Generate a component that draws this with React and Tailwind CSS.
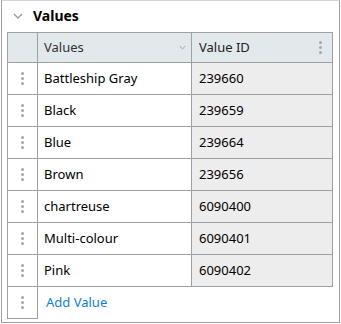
const ROWS = [
  { name: 'Battleship Gray', id: '239660' },
  { name: 'Black', id: '239659' },
  { name: 'Blue', id: '239664' },
  { name: 'Brown', id: '239656' },
  { name: 'chartreuse', id: '6090400' },
  { name: 'Multi-colour', id: '6090401' },
  { name: 'Pink', id: '6090402' },
];

function Dots() {
  return (
    <div className="flex flex-col gap-[2px]">
      <span className="w-[3px] h-[3px] rounded-full bg-[#a6a6a6]" />
      <span className="w-[3px] h-[3px] rounded-full bg-[#a6a6a6]" />
      <span className="w-[3px] h-[3px] rounded-full bg-[#a6a6a6]" />
    </div>
  );
}

function Chevron({ className }) {
  return (
    <svg viewBox="0 0 10 6" className={className} fill="none" stroke="currentColor" strokeWidth="1.3">
      <path d="M1 1l4 4 4-4" />
    </svg>
  );
}

export default function App() {
  return (
    <div className="w-[341px] h-[324px] bg-white font-['Noto_Sans',sans-serif] text-[13px] text-[#1a1a1a]">
      <div className="ml-px w-[339px] h-[323px] border border-[#a0a0a0] border-t-[#d4d4d4] pl-[5px]">
        <div className="h-[31px] flex items-center pl-[5px]">
          <Chevron className="w-[10px] h-[6px] text-[#9a9a9a] ml-[1px] mb-[2px]" />
          <span className="ml-[10px] mb-[2px] text-[14px] font-bold text-black">Values</span>
        </div>

        <div className="w-[326px] border-l border-t border-[#a0a0a0]">
          <div className="flex h-[30px] bg-[#e1e9ec]">
            <div className="w-[30px] border-r border-b border-[#a0a0a0]" />
            <div className="w-[154px] border-r border-b border-[#a0a0a0] flex items-center justify-between pl-[6px] pr-[5px] text-[#333]">
              <span>Values</span>
              <Chevron className="w-[7px] h-[5px] text-[#999]" />
            </div>
            <div className="w-[141px] border-r border-b border-[#a0a0a0] flex items-center justify-between pl-[7px] pr-[10px] text-[#222]">
              <span>Value ID</span>
              <Dots />
            </div>
          </div>

          {ROWS.map((r) => (
            <div key={r.id} className="flex h-[32px]">
              <div className="w-[30px] border-r border-b border-[#a0a0a0] flex items-center justify-center">
                <Dots />
              </div>
              <div className="w-[154px] border-r border-b border-[#a0a0a0] flex items-center pl-[6px] text-black">
                {r.name}
              </div>
              <div className="w-[141px] border-r border-b border-[#a0a0a0] bg-[#ededed] flex items-center pl-[7px] text-black">
                {r.id}
              </div>
            </div>
          ))}

          <div className="flex h-[32px]">
            <div className="w-[30px] border-r border-b border-[#a0a0a0] flex items-center justify-center">
              <Dots />
            </div>
            <div className="flex items-center pl-[8px] text-[#0f7fcf] cursor-pointer">Add Value</div>
          </div>
        </div>
      </div>
    </div>
  );
}
